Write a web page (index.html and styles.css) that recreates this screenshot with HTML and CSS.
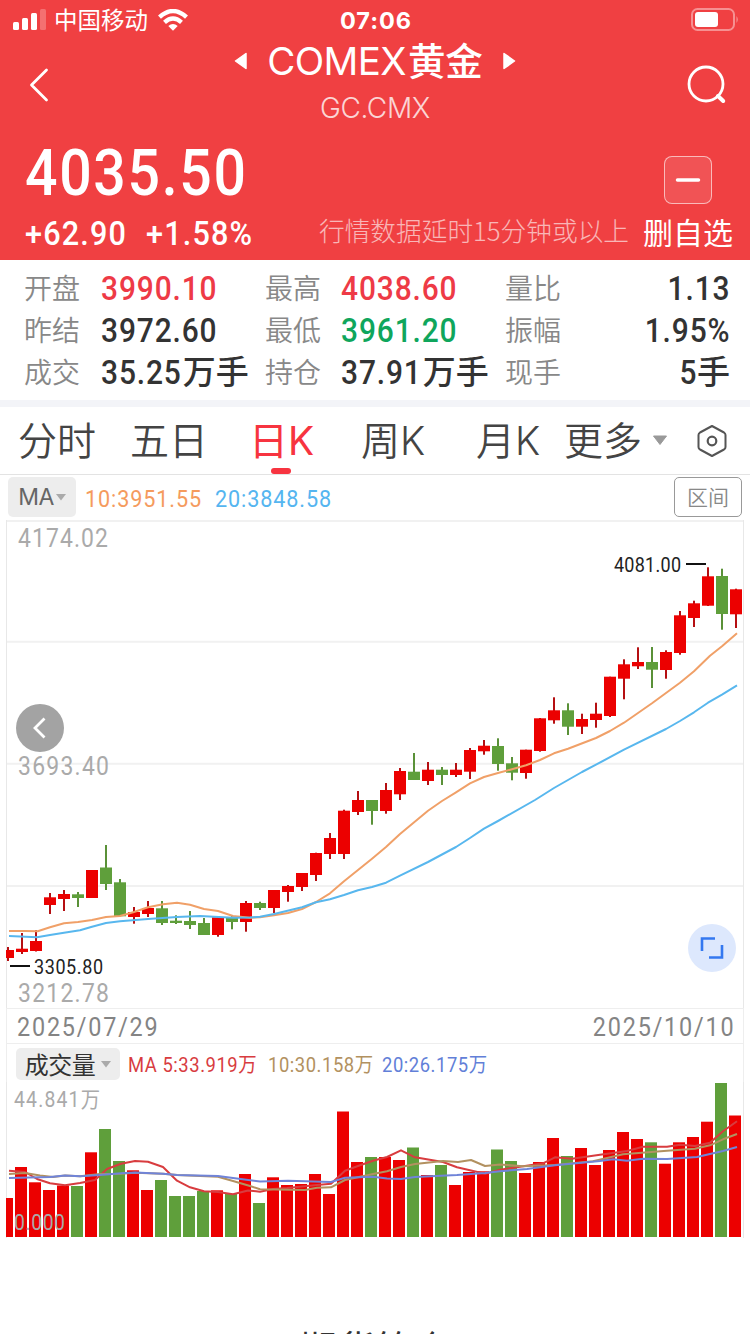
FILE: index.html
```html
<!DOCTYPE html>
<html lang="zh-CN">
<head>
<meta charset="utf-8">
<title>COMEX黄金</title>
<link rel="stylesheet" href="styles.css">
</head>
<body>
<header class="hero">
  <div class="status">
    <div class="status-left">
      <svg width="34" height="22" viewBox="0 0 34 22"><g fill="#fff"><rect x="0" y="13" width="6" height="8" rx="1.5"/><rect x="9" y="9" width="6" height="12" rx="1.5"/><rect x="18" y="4" width="6" height="17" rx="1.5"/><rect x="27" y="0" width="6" height="21" rx="1.5" opacity=".25"/></g></svg>
      <span class="carrier">中国移动</span>
      <svg class="wifi" width="30" height="22" viewBox="0 0 30 22"><g fill="none" stroke="#fff" stroke-width="4.300"><path d="M1.5 8.2Q15-4.2 28.500 8.200"/><path d="M6.500 13.300Q15 5.700 23.500 13.300"/></g><path d="M10.300 17Q15 13 19.700 17L15 21.800Z" fill="#fff"/></svg>
    </div>
    <span class="clock">07:06</span>
    <svg class="battery" width="48" height="24" viewBox="0 0 48 24"><rect x="1" y="1" width="42" height="21" rx="5.500" fill="none" stroke="#fff" stroke-opacity=".42" stroke-width="2"/><rect x="4" y="4" width="23" height="15" rx="3" fill="#fff"/><path d="M45.500 8q2.500 3.500 0 7z" fill="#fff" opacity=".45"/></svg>
  </div>
  <nav class="navbar">
    <svg width="20" height="34" viewBox="0 0 20 34"><path d="M17.500 2L2.500 17l15 15" fill="none" stroke="#fff" stroke-width="2.800" stroke-linecap="round" stroke-linejoin="round"/></svg>
    <div class="titles">
      <div class="title-row">
        <svg width="14" height="18" viewBox="0 0 14 18"><path d="M12 1.500V16.500L1.500 9Z" fill="#fff" stroke="#fff" stroke-width="1.500" stroke-linejoin="round"/></svg>
        <h1 class="title">COMEX<span class="title-cn">黄金</span></h1>
        <svg width="14" height="18" viewBox="0 0 14 18"><path d="M2 1.500V16.500L12.500 9Z" fill="#fff" stroke="#fff" stroke-width="1.500" stroke-linejoin="round"/></svg>
      </div>
      <div class="code">GC.CMX</div>
    </div>
    <svg width="40" height="42" viewBox="0 0 40 42"><circle cx="19" cy="20" r="17" fill="none" stroke="#fff" stroke-width="2.800"/><path d="M31 32L36.200 37" stroke="#fff" stroke-width="4" stroke-linecap="round"/></svg>
  </nav>
  <div class="price-row">
    <div class="price">4035.50</div>
    <div class="minus"><svg width="26" height="6" viewBox="0 0 26 6"><path d="M2.500 3h21" stroke="#fff" stroke-width="3.500" stroke-linecap="round"/></svg></div>
  </div>
  <div class="change-row">
    <span class="change">+62.90</span><span class="change pct">+1.58%</span>
    <span class="delay">行情数据延时15分钟或以上</span>
    <span class="remove">删自选</span>
  </div>
</header>
<section class="stats">
  <span class="label">开盘</span><span class="num up"><i class="din">3990.10</i></span><span class="label">最高</span><span class="num up"><i class="din">4038.60</i></span><span class="label">量比</span><span class="num end"><i class="din">1.13</i></span>
  <span class="label">昨结</span><span class="num"><i class="din">3972.60</i></span><span class="label">最低</span><span class="num down"><i class="din">3961.20</i></span><span class="label">振幅</span><span class="num end"><i class="din">1.95%</i></span>
  <span class="label">成交</span><span class="num"><i class="din">35.25</i><b class="unit">万手</b></span><span class="label">持仓</span><span class="num"><i class="din">37.91</i><b class="unit">万手</b></span><span class="label">现手</span><span class="num end"><i class="din">5</i><b class="unit">手</b></span>
</section>
<nav class="tabs">
  <span class="tab">分时</span><span class="tab">五日</span><span class="tab active">日K</span><span class="tab">周K</span><span class="tab">月K</span>
  <span class="tab more">更多<svg width="16" height="11" viewBox="0 0 16 11"><path d="M1.500 1h13L8 9.500Z" fill="#999" stroke="#999" stroke-linejoin="round"/></svg></span>
  <svg class="gear" width="32" height="34" viewBox="0 0 32 34"><path d="M16 2L28 8.500Q29.500 9.400 29.500 11V23Q29.500 24.600 28 25.500L16 32L4 25.500Q2.500 24.600 2.500 23V11Q2.500 9.400 4 8.500Z" fill="none" stroke="#555" stroke-width="2" stroke-linejoin="round"/><circle cx="16" cy="17" r="4.300" fill="none" stroke="#555" stroke-width="2.200"/></svg>
</nav>
<div class="legend">
  <span class="picker">MA<svg width="10" height="7" viewBox="0 0 10 7"><path d="M0 0h10L5 6.500Z" fill="#aaa"/></svg></span>
  <span class="ma ma-a">10:3951.55</span><span class="ma ma-b">20:3848.58</span>
  <span class="range">区间</span>
</div>
<section class="kline">
  <svg id="kline" class="plot" width="750" height="488" viewBox="0 520 750 488"></svg>
  <button class="prev" aria-label="prev"><svg width="48" height="48" viewBox="0 0 48 48"><path d="M28.500 14.500L19 24l9.500 9.500" fill="none" stroke="#fff" stroke-width="2.800"/></svg></button>
  <button class="expand" aria-label="expand"><svg width="48" height="48" viewBox="0 0 48 48"><path d="M14 27V14.500H27M34 21V33.500H21" fill="none" stroke="#3478f0" stroke-width="2.600"/></svg></button>
</section>
<div class="dates"><span class="date">2025/07/29</span><span class="date date-end">2025/10/10</span></div>
<div class="vol-legend">
  <span class="picker vol-picker">成交量<svg width="10" height="7" viewBox="0 0 10 7"><path d="M0 0h10L5 6.500Z" fill="#aaa"/></svg></span>
  <span class="vma v5">MA 5:33.919<i class="wan">万</i></span><span class="vma v10">10:30.158<i class="wan">万</i></span><span class="vma v20">20:26.175<i class="wan">万</i></span>
</div>
<svg id="volume" class="plot" width="750" height="156" viewBox="0 1082 750 156"></svg>
<footer class="intro">期货简介</footer>
<script src="chart.js"></script>
</body>
</html>
```
FILE: styles.css
```css
* { box-sizing: border-box; }
body {
  margin: 0;
  width: 750px;
  height: 1334px;
  overflow: hidden;
  background: #fff;
  color: #333;
  font-family: Inter, "Noto Sans CJK SC", sans-serif;
}
svg { display: block; flex: none; }
.hero { height: 260px; background: #f04042; color: #fff; }
.status { height: 40px; display: grid; grid-template-columns: 1fr auto 1fr; align-items: center; padding: 0 11px 0 13px; }
.status-left { display: flex; align-items: center; }
.carrier { font: 400 23.500px/38px "Noto Sans CJK SC", sans-serif; margin: 0 0 2px 7px; }
.wifi { margin-left: 10px; }
.clock { font-size: 23.500px; font-weight: 700; letter-spacing: 1px; }
.battery { justify-self: end; }
.navbar { height: 90px; display: flex; justify-content: space-between; align-items: center; padding: 0 23px 0 29px; }
.titles { display: flex; flex-direction: column; align-items: center; height: 90px; margin-left: 14px; }
.title-row { height: 42px; display: flex; align-items: center; gap: 19px; }
.title { margin: -3px 0 0; font-size: 38.500px; line-height: 42px; font-weight: 400; letter-spacing: -.600px; white-space: nowrap; }
.title-cn { font: 500 37.500px/42px "Noto Sans CJK SC", sans-serif; letter-spacing: 0; margin-left: 2px; }
.code { font-size: 28px; line-height: 34px; margin-top: 9px; font-weight: 350; opacity: .78; letter-spacing: -.3px; }
.price-row { height: 76px; display: flex; justify-content: space-between; padding: 0 38px 0 25px; }
.price { font: 500 65px/86px Roboto, sans-serif; letter-spacing: 1.900px; transform: scaleX(.88); transform-origin: 0 0; }
.minus { width: 48px; height: 48px; margin-top: 26px; border: 1px solid rgba(255,255,255,.6); border-radius: 8px; background: rgba(255,255,255,.1); display: flex; align-items: center; justify-content: center; }
.change-row { height: 54px; display: flex; align-items: center; padding: 0 16px 0 25px; white-space: nowrap; }
.change { font: 500 34px/54px Roboto, sans-serif; letter-spacing: 1.300px; width: 121px; transform: scaleX(.9); transform-origin: 0 0; }
.pct { width: 173px; }
.delay { font: 300 25.700px/50px "Noto Sans CJK SC", sans-serif; opacity: .62; width: 324px; margin-top: -6px; }
.remove { font: 400 30px/54px "Noto Sans CJK SC", sans-serif; margin-top: -5px; }
.stats { height: 147px; padding: 7px 20px 0 24px; border-bottom: 7px solid #f3f4f8; display: grid; grid-template-columns: 77px 164px 76px 164px 76px 149px; grid-template-rows: repeat(3, 42px); }
.label { font: 350 28px/40px "Noto Sans CJK SC", sans-serif; color: #888; }
.num { font: 500 34px/43px Roboto, "Noto Sans CJK SC", sans-serif; white-space: nowrap; }
.din { display: inline-block; font-style: normal; letter-spacing: 1px; transform: scaleX(.88); transform-origin: 0 0; }
.end .din { transform-origin: 100% 0; }
.unit { display: inline-block; font: 500 33px/42px "Noto Sans CJK SC", sans-serif; margin-left: -10px; vertical-align: top; margin-top: -2px; }
.end .unit { margin-left: 0; }
.up { color: #ee3a46; }
.down { color: #0fa65c; }
.end { text-align: right; }
.tabs { height: 68px; display: grid; grid-template-columns: 112px 119px 112px 115px 88px 132px 32px; align-items: center; padding-left: 18px; border-bottom: 1px solid #e3e3e3; }
.tab { position: relative; font-size: 39px; line-height: 67px; color: #444; font-weight: 350; white-space: nowrap; }
.more { display: flex; align-items: center; gap: 10px; }
.active { color: #f73440; font-weight: 400; }
.active::after { content: ""; position: absolute; left: 22px; bottom: 0; width: 20px; height: 6px; border-radius: 3px; background: #f73440; }
.legend { height: 45px; padding: 2px 8px 3px; display: flex; align-items: center; }
.picker { width: 68px; height: 40px; border-radius: 5px; background: #ededed; color: #666; font-size: 23px; display: flex; align-items: center; justify-content: center; gap: 2px; letter-spacing: -.5px; }
.ma { font: 400 24px/44px Roboto, sans-serif; letter-spacing: 1px; width: 130px; margin-top: 4px; transform: scaleX(.9); transform-origin: 0 0; }
.ma-a { color: #f59b5e; margin-left: 9px; }
.ma-b { color: #55b5f0; }
.range { margin-left: auto; width: 68px; height: 40px; border: 1px solid #999; border-radius: 5px; text-align: center; font: 350 21px/37px "Noto Sans CJK SC", sans-serif; color: #888; }
.kline { position: relative; height: 488px; }
.prev, .expand { position: absolute; padding: 0; border: 0; width: 48px; height: 48px; border-radius: 50%; }
.prev { left: 16px; top: 184px; background: #a3a3a3; }
.expand { left: 688px; top: 404px; background: #dde8fd; }
.dates { height: 36px; margin: 0 6px; padding: 0 8px 0 10px; display: flex; justify-content: space-between; border: 1px solid #eee; font: 400 26px/37px Roboto, sans-serif; color: #848484; }
.date { letter-spacing: 2px; transform: scaleX(.9); transform-origin: 0 0; }
.date-end { transform-origin: 100% 0; }
.vol-legend { height: 38px; margin: 0 6px; padding: 0 9px; display: flex; align-items: center; border: 1px solid #eee; border-width: 0 1px; }
.vol-picker { width: 104px; height: 32px; margin-top: 2px; gap: 6px; font: 400 24px/30px "Noto Sans CJK SC", sans-serif; color: #333; }
.vma { font: 400 20px/36px Roboto, sans-serif; letter-spacing: .6px; white-space: nowrap; margin-top: 4px; transform: scaleX(.92); transform-origin: 0 0; }
.wan { font: 400 20px/30px "Noto Sans CJK SC", sans-serif; }
.v5 { color: #d83c3f; margin-left: 8px; width: 140px; }
.v10 { color: #b29160; width: 114px; }
.v20 { color: #627fd8; }
.grid { stroke: #f1f1f1; stroke-width: 2; }
.frame { stroke: #e8e8e8; stroke-width: 1; }
.axis { font: 400 25.500px Roboto, "Noto Sans CJK SC", sans-serif; fill: #aaa; }
.vol-axis { font: 400 21.500px Roboto, "Noto Sans CJK SC", sans-serif; fill: #aaa; }
.mark { font: 400 20px Roboto, sans-serif; fill: #222; }
.line { fill: none; stroke-width: 2; stroke-linejoin: round; }
.intro { height: 96px; padding-top: 90px; text-align: center; font: 400 38px/38px "Noto Sans CJK SC", sans-serif; color: #333; }
```
FILE: chart.js
```js
// [rising, high, body top, body bottom, low, volume top]
const bars = [
[1,947,950,958,961,1198],[1,933,948.7,952,954,1167],[1,930,941,951,951.5,1182.3],[1,893,897.3,905,914,1190],
[1,890,894,899,911,1185.5],[0,892,894.3,898,907,1186],[1,870,870,898,898,1152.3],[0,845,867.5,884,890,1129],
[0,879,882.3,916.3,916.3,1161],[1,907,912,917,923.7,1170.3],[1,901,908,914,917,1190],[0,901,908.3,923,925,1180],
[0,915.3,920.7,923,924,1196],[0,911,921,925,929,1196],[0,918,923,935,935,1191],[1,917,917.3,935,936.7,1190.3],
[0,916,917.3,922,929.3,1194],[1,901,903,922,931.7,1174],[0,901.7,903,908,910,1203],[1,890,890,908,913,1177.3],
[1,885,886,892,901.7,1185],[1,873,873,887,891,1184],[1,852.7,853,875,881,1174],[1,833,838,854,859,1194],
[1,809.7,810.7,854,859,1111.5],[1,791,800,812,815,1162],[0,800,800,811,824.7,1157],[1,783,790,811,813.7,1157],
[1,768,771,794.3,800,1160],[0,753,771.7,780,780,1147.5],[1,762,769.7,781,785,1175],[0,767,769.7,775,785,1165],
[1,763,769.7,775,777,1185],[1,748,750,771.7,779,1172],[1,740,745.7,751.3,754.7,1171.3],[0,738.3,746,764,770.7,1149.5],
[0,757,763.3,772.7,780.3,1161],[1,749.7,749.7,773,778.7,1173],[1,718,718.3,751,751.7,1162],[1,697.3,710.3,720.3,723.7,1138],
[0,703.3,710.3,726.7,735,1156],[1,713.7,719,726.7,734,1148],[1,702.7,713.7,720,727.7,1165],[1,676.7,676.7,716,717,1150],
[1,659.3,664.3,678.7,699.3,1132],[1,647.3,662,666.3,669,1139],[0,647,662,669.7,688,1142.3],[1,650.3,652,670,678.7,1163.7],
[1,611,615.3,653,654.7,1142.3],[1,600.7,603.3,618,627,1137],[1,567.3,576.3,605.7,606,1121.7],[0,568.7,576,614,629.7,1083],
[1,588.7,589.3,614.3,628,1115.5]];

const ma10 = "9,931 25,931 37.7,931.3 50,927.3 64,923.3 78,922 92,920 106,917 120,916 134,912 148,907.3 163,904.3 177,902.7 190,904.7 204,909 218,911 233,916 250,917.7 260,917.3 274,915.3 288,913 302,909 316,902 330,893.3 344,881.3 358,870 372,858.7 386,847 400,834 428,810.7 442,801 456,792.3 470,783.3 484,777 498,773 512,769.3 526,765.3 540,760 554,753.3 568,748.7 596,738 610,731 624,722.7 652,703.3 680,682.7 694,671.3 710,655.7 722,646.3 737,633.3";
const ma20 = "9,936 37,937.3 50,935 64,932.7 80,930.3 92,926.7 106,923 120,921.3 148,919 177,917 200,916 233,917.7 250,917.5 260,916.7 274,914 302,907.3 316,902.3 330,899.3 344,895 358,890.3 372,887 386,882.7 400,875.7 428,862 456,847 470,838 484,828.7 498,821 535,800 554,788 582,772 596,764.7 624,749.7 666,729 680,721 694,712.3 708,702.7 722,694.7 737,685.3";
const vol5 = "9,1170.7 25,1172 37,1179 50,1183.3 65,1185.3 80,1183 95,1180 107,1169 121,1163.7 135,1161 148,1161.7 163,1167 177,1180.7 190,1187.3 204,1191.3 218,1192 233,1194.3 248,1190.5 260,1191.7 273,1189 287,1188 317,1185 331,1183.7 345,1170.7 358,1166 373,1160.7 387,1157 401,1150.3 415,1157.3 443,1162 457,1167.3 485,1173.7 500,1169.7 520,1166.7 543,1163.3 555,1157.3 572,1158.7 600,1154.7 627,1151 643,1146.7 667,1146.7 680,1144.7 695,1146 710,1142.7 723,1131.3 737,1121.3";
const vol10 = "9,1174 25,1173 40,1175.5 53,1177 65,1175.5 80,1176.3 100,1174 121,1173.7 135,1172.7 163,1173.7 177,1175 218,1176.7 233,1181 250,1186 260,1189.3 305,1190 317,1187.7 331,1187.3 345,1180 373,1174 387,1171.3 401,1167 415,1164 443,1161 458,1162 471,1160 485,1166 500,1164.5 523,1166.3 555,1165 593,1161.3 623,1154.3 667,1150.7 695,1148.7 710,1145.3 723,1139.3 737,1134";
const vol20 = "9,1178 50,1177 65,1175.5 80,1176.3 100,1175 121,1173.3 135,1172.5 163,1173.7 177,1175 218,1176 233,1178 260,1181.5 288,1180.7 331,1182 345,1177.7 373,1176.7 387,1178.5 401,1179 415,1177 457,1175 485,1173 500,1171.3 527,1169 555,1165.3 600,1161 613,1159.3 627,1160.7 643,1158.7 667,1159 697,1157 723,1151 737,1147";

const RED = "#ec0000", GREEN = "#5f9f3b";
const line = (pts, c) => `<polyline class="line" points="${pts}" stroke="${c}"/>`;
const rect = (x, y, w, h, c) => `<rect x="${x}" y="${y}" width="${w}" height="${h}" fill="${c}"/>`;
// Axis numerals are set slightly condensed
const text = (cls, x, y, len, s) => `<text class="${cls}" transform="translate(${x} ${y}) scale(.9 1)" textLength="${len / .9}">${s}</text>`;

let k = [641.7, 763.7, 886].map(y => `<path class="grid" d="M7 ${y}H743"/>`).join("");
k += `<path class="grid" d="M6 521H744"/><path class="frame" d="M6.500 520V1008M743.500 520V1008"/>`;
k += text("axis", 18, 547, 90, "4174.02") + text("axis", 18, 774.5, 91, "3693.40") + text("axis", 18, 1002, 91, "3212.78");
let v = `<path class="frame" d="M6.500 1082V1238M743.500 1082V1238"/>` + text("vol-axis", 14, 1107, 86, "44.841万");

bars.forEach(([up, hi, top, bot, lo, vt], i) => {
  const cx = 8 + 14 * i, x = Math.max(6, cx - 6);
  k += rect(cx - 1, hi, 2, lo - hi, up ? "#b50f12" : "#5a9138");
  k += rect(x, top, cx + 6 - x, bot - top, up ? RED : GREEN);
  const vx = Math.max(6, 1 + 14 * i);
  v += rect(vx, vt, 13 + 14 * i - vx, 1237 - vt, up ? RED : GREEN);
});
k += line(ma10, "#f0a068") + line(ma20, "#58b7ee");
k += `<path d="M10 966H30M686 564H706" stroke="#111" stroke-width="2"/>`;
k += text("mark", 34, 974, 69, "3305.80") + text("mark", 614, 572, 67, "4081.00");
v += line(vol5, "#d83c3f") + line(vol10, "#b29160") + line(vol20, "#7084d8");
v += text("vol-axis", 14, 1230, 51, "0.000");
document.getElementById("kline").innerHTML = k;
document.getElementById("volume").innerHTML = v;
```
